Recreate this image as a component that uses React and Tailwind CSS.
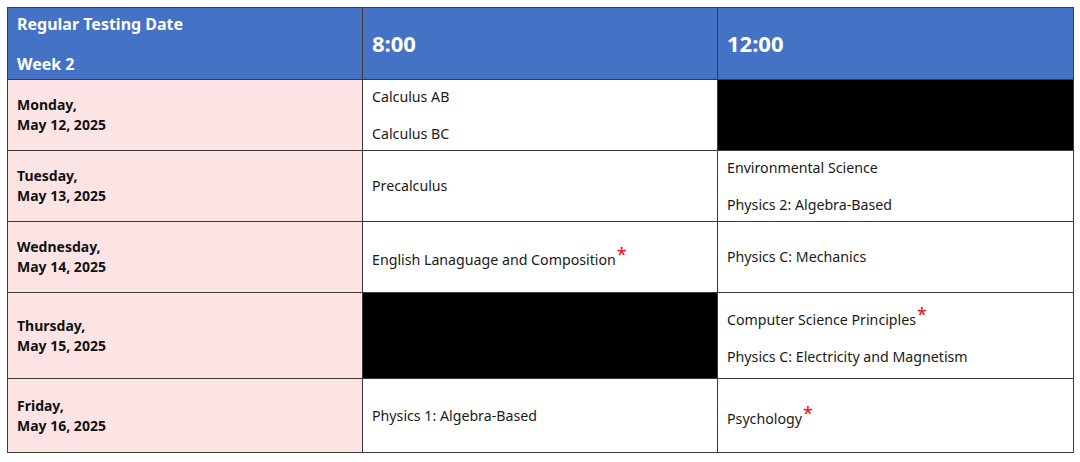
import React from 'react';

const rows = [
    { day: 'Monday,', date: 'May 12, 2025', h: 'h-[71px]', am: ['Calculus AB', 'Calculus BC'], pm: null },
    { day: 'Tuesday,', date: 'May 13, 2025', h: 'h-[71px]', am: ['Precalculus'], pm: ['Environmental Science', 'Physics 2: Algebra-Based'] },
    { day: 'Wednesday,', date: 'May 14, 2025', h: 'h-[71px]', am: [['English Lanaguage and Composition', true]], pm: ['Physics C: Mechanics'] },
    { day: 'Thursday,', date: 'May 15, 2025', h: 'h-[86px]', am: null, pm: [['Computer Science Principles', true], 'Physics C: Electricity and Magnetism'] },
    { day: 'Friday,', date: 'May 16, 2025', h: 'h-[74px]', am: ['Physics 1: Algebra-Based'], pm: [['Psychology', true]] },
];

const Exam = ({ item }) => {
    const [name, star] = Array.isArray(item) ? item : [item, false];
    return (
        <p className={star ? 'leading-[20px] pt-[6px]' : 'leading-[20px]'}>
            {name}
            {star && <sup className="text-[#ff0000] text-[18px] ml-[1px] relative top-[-4px]">*</sup>}
        </p>
    );
};

const Slot = ({ list }) => {
    if (!list) return <td className="bg-black border border-[#3a3a3a]"></td>;
    return (
        <td className="border border-[#3a3a3a] bg-white px-[9px] align-middle">
            <div className="flex flex-col gap-[17px] text-[14.2px] text-[#1a1a1a]">
                {list.map((item, i) => <Exam key={i} item={item} />)}
            </div>
        </td>
    );
};

const App = () => {
    return (
        <div className="min-h-screen bg-white pt-[7px] pl-[7px]" style={{ fontFamily: '"Noto Sans", "Liberation Sans", sans-serif' }}>
            <table className="border-collapse table-fixed w-[1066px]">
                <colgroup>
                    <col className="w-[355px]" />
                    <col className="w-[355px]" />
                    <col className="w-[356px]" />
                </colgroup>
                <thead>
                    <tr className="h-[72px] bg-[#4472c4] text-white">
                        <th className="border border-[#3a3a3a] px-[9px] text-left align-middle font-bold">
                            <div className="flex flex-col gap-[20px] text-[16px] leading-[20px]">
                                <span>Regular Testing Date</span>
                                <span>Week 2</span>
                            </div>
                        </th>
                        <th className="border border-[#3a3a3a] px-[9px] text-left text-[22px] font-bold">8:00</th>
                        <th className="border border-[#3a3a3a] px-[9px] text-left text-[22px] font-bold">12:00</th>
                    </tr>
                </thead>
                <tbody>
                    {rows.map((r) => (
                        <tr key={r.date} className={r.h}>
                            <td className="border border-[#3a3a3a] bg-[#fde4e4] px-[9px] align-middle">
                                <div className="flex flex-col text-[14px] font-bold leading-[20px] text-[#111]">
                                    <span>{r.day}</span>
                                    <span>{r.date}</span>
                                </div>
                            </td>
                            <Slot list={r.am} />
                            <Slot list={r.pm} />
                        </tr>
                    ))}
                </tbody>
            </table>
        </div>
    );
};

export default App;
